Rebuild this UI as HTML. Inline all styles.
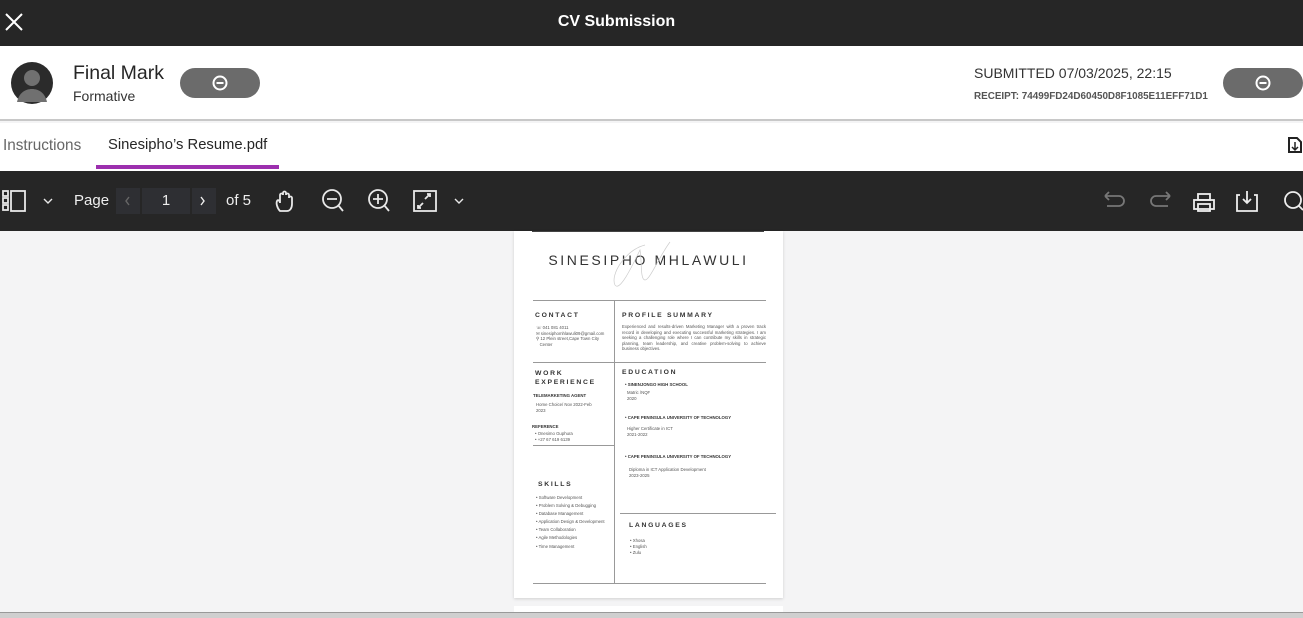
<!DOCTYPE html>
<html><head><meta charset="utf-8"><style>
*{margin:0;padding:0;box-sizing:border-box}
body{width:1303px;height:618px;overflow:hidden;background:#f4f4f5;font-family:"Liberation Sans",sans-serif;position:relative}
.a{position:absolute}
.t{white-space:nowrap}
.r{font-size:4.3px;color:#555;line-height:5.5px}
.h{font-size:6.8px;letter-spacing:1.7px;font-weight:bold;color:#333}
</style></head><body>
<div class="a" style="left:0;top:0;width:1303px;height:46px;background:#262626"></div>
<svg class="a" style="left:4px;top:12px" width="20" height="20"><path d="M2 2L18 18M18 2L2 18" stroke="#fff" stroke-width="2"/></svg>
<div class="a t" style="left:0;width:1233px;top:13px;text-align:center;color:#fff;font-size:16px;font-weight:bold">CV Submission</div>
<div class="a" style="left:0;top:46px;width:1303px;height:75px;background:#fff;border-bottom:2px solid #c8c8c8"></div>
<svg class="a" style="left:11px;top:62px" width="42" height="42"><circle cx="21" cy="21" r="21" fill="#2b2b2b"/><circle cx="21" cy="16" r="8" fill="#707070"/><path d="M6 40c2-9 8-13 15-13s13 4 15 13z" fill="#707070"/></svg>
<div class="a t" style="left:73px;top:62px;font-size:19.5px;color:#262626">Final Mark</div>
<div class="a t" style="left:73px;top:88px;font-size:14px;color:#333">Formative</div>
<div class="a" style="left:180px;top:68px;width:80px;height:30px;border-radius:15px;background:#6b6b6b"></div>
<svg class="a" style="left:212px;top:75px" width="16" height="16"><circle cx="8" cy="8" r="6.5" stroke="#fff" stroke-width="2" fill="none"/><path d="M4.5 8h7" stroke="#fff" stroke-width="2"/></svg>
<div class="a t" style="left:974px;top:65px;font-size:14px;color:#333">SUBMITTED 07/03/2025, 22:15</div>
<div class="a t" style="left:974px;top:91px;font-size:9.9px;font-weight:bold;color:#555">RECEIPT: 74499FD24D60450D8F1085E11EFF71D1</div>
<div class="a" style="left:1223px;top:68px;width:80px;height:30px;border-radius:15px;background:#6b6b6b"></div>
<svg class="a" style="left:1255px;top:75px" width="16" height="16"><circle cx="8" cy="8" r="6.5" stroke="#fff" stroke-width="2" fill="none"/><path d="M4.5 8h7" stroke="#fff" stroke-width="2"/></svg>
<div class="a" style="left:0;top:123px;width:1303px;height:48px;background:#fff"></div>
<div class="a t" style="left:3px;top:137px;font-size:15.3px;color:#666">Instructions</div>
<div class="a t" style="left:108px;top:137px;font-size:14.8px;color:#262626">Sinesipho’s Resume.pdf</div>
<div class="a" style="left:96px;top:165px;width:183px;height:4px;background:#9c2fae"></div>
<svg class="a" style="left:1287px;top:137px" width="16" height="16"><path d="M2 1h8l4 4v10H2z" fill="none" stroke="#222" stroke-width="2"/><path d="M8 5v8M5 10l3 3 3-3" stroke="#222" stroke-width="1.5" fill="none"/></svg>
<div class="a" style="left:0;top:171px;width:1303px;height:60px;background:#262626"></div>
<svg class="a" style="left:0;top:189px" width="480" height="26" fill="none" stroke="#e8e8e8" stroke-width="1.8">
<rect x="3" y="2" width="5" height="5"/><rect x="3" y="9" width="5" height="5"/><rect x="3" y="16" width="5" height="5"/><rect x="11" y="2" width="14" height="20"/>
<path d="M44 10l4 4 4-4" stroke-width="1.4"/>
<path d="M280 22c-3-3-4-8-3-10 1-2 3 0 3 2V6c0-2 3-2 3 0V4c0-2 3-2 3 0v2c0-2 3-2 3 0v3c0-2 3-2 3 0v6c0 4-2 7-5 7z"/>
<circle cx="332" cy="10" r="9"/><path d="M327 10h10M338 16l5 6"/>
<circle cx="378" cy="10" r="9"/><path d="M373 10h10M378 5v10M384 16l5 6"/>
<rect x="414" y="2" width="22" height="20"/><path d="M425 10l5-5M427 5h3v3M423 14l-5 5M418 16v3h3"/>
<path d="M455 10l4 4 4-4" stroke-width="1.4"/>
</svg>
<div class="a t" style="left:74px;top:192px;font-size:15px;color:#eee">Page</div>
<div class="a" style="left:116px;top:188px;width:24px;height:26px;background:#2e2f33"></div>
<div class="a" style="left:142px;top:188px;width:48px;height:26px;background:#2e2f33;color:#eee;font-size:15px;text-align:center;line-height:26px">1</div>
<div class="a" style="left:192px;top:188px;width:24px;height:26px;background:#2e2f33"></div>
<svg class="a" style="left:192px;top:189px" width="24" height="26"><path d="M9 8l3 4-3 4" stroke="#eee" stroke-width="1.4" fill="none"/></svg>
<svg class="a" style="left:116px;top:189px" width="24" height="26"><path d="M13 8l-3 4 3 4" stroke="#666" stroke-width="1.4" fill="none"/></svg>
<div class="a t" style="left:226px;top:192px;font-size:15px;color:#eee">of 5</div>
<svg class="a" style="left:1095px;top:186px" width="208" height="30" fill="none" stroke-width="1.8">
<path d="M10 10h14a5 5 0 010 10H12M10 10l4-4M10 10l4 4" stroke="#777"/>
<path d="M75 10H61a5 5 0 000 10h12M75 10l-4-4M75 10l-4 4" stroke="#777"/>
<g stroke="#eee"><rect x="103" y="8" width="12" height="6"/><rect x="99" y="14" width="20" height="9"/><rect x="103" y="18" width="12" height="7"/>
<path d="M145 9h-3v16h20V9h-3M152 5v12M148 13l4 4 4-4"/>
<circle cx="198" cy="14" r="8"/><path d="M204 20l4 4"/></g>
</svg>
<div class="a" style="left:514px;top:231px;width:269px;height:367px;background:#fff;box-shadow:0 1px 3px rgba(0,0,0,.15)"></div>
<div class="a" style="left:532px;top:231px;width:232px;height:1px;background:#444"></div>
<div class="a" style="left:514px;top:606px;width:269px;height:8px;background:#fff"></div>
<div class="a t" style="left:514px;width:269px;top:252px;text-align:center;font-size:14px;letter-spacing:2.6px;color:#333">SINESIPHO MHLAWULI</div>
<svg class="a" style="left:605px;top:240px" width="70" height="55"><path d="M40 5c-20 5-35 30-30 40 5 8 20-25 25-35 2 10 0 30 5 30s15-25 25-38" stroke="#ccc" fill="none" stroke-width=".7"/></svg>
<div class="a" style="left:533px;top:300px;width:233px;height:1px;background:#999"></div>
<div class="a" style="left:614px;top:301px;width:1px;height:282px;background:#999"></div>
<div class="a" style="left:533px;top:362px;width:233px;height:1px;background:#999"></div>
<div class="a" style="left:533px;top:445px;width:81px;height:1px;background:#999"></div>
<div class="a" style="left:620px;top:513px;width:156px;height:1px;background:#999"></div>
<div class="a" style="left:533px;top:583px;width:233px;height:1px;background:#999"></div>
<div class="a h t" style="left:535px;top:312px">CONTACT</div>
<div class="a r" style="left:536px;top:325px">☏ 041 081 4011<br>✉ sinesiphomhlawuli09@gmail.com<br>⚲ 12 Plein street,Cape Town City<br>&nbsp;&nbsp;&nbsp;Center</div>
<div class="a h t" style="left:622px;top:312px">PROFILE SUMMARY</div>
<div class="a r" style="left:622px;top:324px;width:144px;text-align:justify">Experienced and results-driven Marketing Manager with a proven track record in developing and executing successful marketing strategies. I am seeking a challenging role where I can contribute my skills in strategic planning, team leadership, and creative problem-solving to achieve business objectives.</div>
<div class="a h" style="left:535px;top:369px;line-height:9px">WORK<br>EXPERIENCE</div>
<div class="a r" style="left:533px;top:393px;font-weight:bold;color:#333">TELEMARKETING AGENT</div>
<div class="a r" style="left:536px;top:402px">Home Choice/ Nov 2022-Feb<br>2023</div>
<div class="a r" style="left:532px;top:424px;font-weight:bold;color:#333">REFERENCE</div>
<div class="a r" style="left:535px;top:431px">• Onesimo Guphura<br>• +27 67 619 6139</div>
<div class="a h t" style="left:622px;top:369px">EDUCATION</div>
<div class="a r" style="left:625px;top:382px;font-weight:bold;color:#333">• SINENJONGO HIGH SCHOOL</div>
<div class="a r" style="left:627px;top:390px">Matric /NQF<br>2020</div>
<div class="a r" style="left:625px;top:415px;font-weight:bold;color:#333">• CAPE PENINSULA UNIVERSITY OF TECHNOLOGY</div>
<div class="a r" style="left:627px;top:426px">Higher Certificate in ICT<br>2021-2022</div>
<div class="a r" style="left:625px;top:454px;font-weight:bold;color:#333">• CAPE PENINSULA UNIVERSITY OF TECHNOLOGY</div>
<div class="a r" style="left:629px;top:467px">Diploma in ICT Application Development<br>2023-2025</div>
<div class="a h t" style="left:538px;top:481px">SKILLS</div>
<div class="a r" style="left:536px;top:494px;line-height:8.1px">• Software Development<br>• Problem Solving &amp; Debugging<br>• Database Management<br>• Application Design &amp; Development<br>• Team Collaboration<br>• Agile Methodologies<br>• Time Management</div>
<div class="a h t" style="left:629px;top:522px">LANGUAGES</div>
<div class="a r" style="left:630px;top:538px;line-height:6.2px">• Xhosa<br>• English<br>• Zulu</div>
<div class="a" style="left:0;top:612px;width:1303px;height:6px;background:#cfcfcf;border-top:1px solid #999"></div>
</body></html>
